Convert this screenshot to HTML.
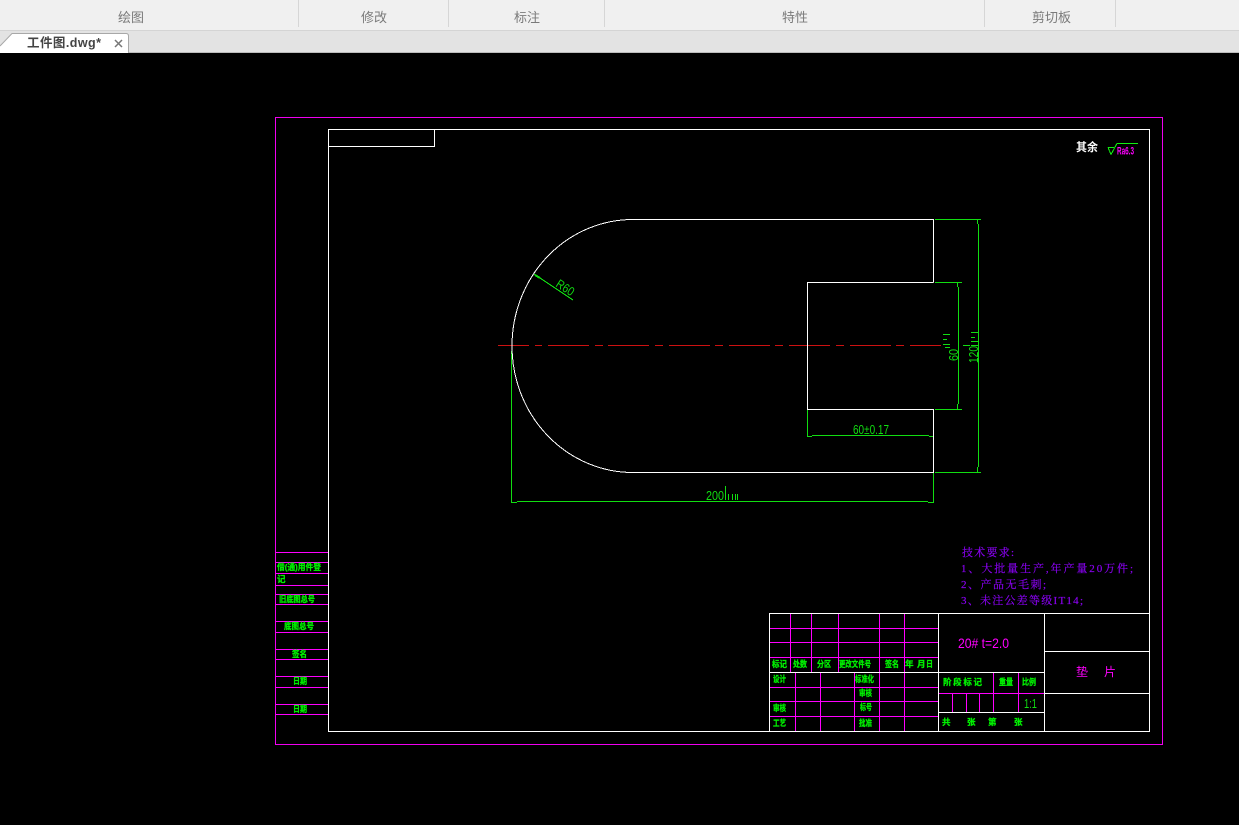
<!DOCTYPE html>
<html lang="zh">
<head>
<meta charset="utf-8">
<title>工件图.dwg</title>
<style>
html,body{margin:0;padding:0;width:1239px;height:825px;overflow:hidden;background:#000}
svg{display:block;position:absolute;left:0;top:0}
.ui{font-family:"Liberation Sans","Noto Sans CJK SC",sans-serif}
.l{font-family:"Liberation Sans","Noto Sans CJK SC",sans-serif;font-size:8.5px;fill:#00f000;stroke:#00f000;stroke-width:.3px;font-weight:700}
.d{font-family:"Liberation Sans",sans-serif;font-size:12.5px;fill:#11dd11}
.t{font-family:"Liberation Serif","Noto Serif CJK SC",serif;font-size:11px;fill:#9000f0;stroke:#8000f0;stroke-width:.2px}
</style>
</head>
<body>
<svg width="1239" height="825" viewBox="0 0 1239 825" xmlns="http://www.w3.org/2000/svg">
<!-- UI chrome -->
<rect x="0" y="0" width="1239" height="30" fill="#f0f0f0"/>
<rect x="0" y="30" width="1239" height="1" fill="#d4d4d4"/>
<rect x="0" y="31" width="1239" height="21" fill="#e3e3e3"/>
<rect x="0" y="52" width="1239" height="1" fill="#bdbdbd"/>
<g fill="#d6d6d6">
<rect x="298" y="0" width="1" height="27"/><rect x="448" y="0" width="1" height="27"/>
<rect x="604" y="0" width="1" height="27"/><rect x="984" y="0" width="1" height="27"/>
<rect x="1115" y="0" width="1" height="27"/>
</g>
<g class="ui" font-size="13" fill="#7a7a7a">
<text x="118" y="22">绘图</text>
<text x="361" y="22">修改</text>
<text x="514" y="22">标注</text>
<text x="782" y="22">特性</text>
<text x="1032" y="22">剪切板</text>
</g>
<path d="M0 53V46L12 33.5H126Q128.500 33.500 128.500 36V53Z" fill="#fff"/>
<path d="M0 46L12 33.500H126Q128.500 33.500 128.500 36V53" fill="none" stroke="#a8a8a8"/>
<text class="ui" x="27" y="47" font-size="12.500" font-weight="700" fill="#444" textLength="74">工件图.dwg*</text>
<path d="M115 40L122 47M122 40L115 47" stroke="#777" stroke-width="1.500" fill="none"/>
<rect x="0" y="53" width="1239" height="772" fill="#000"/>

<!-- frames -->
<g shape-rendering="crispEdges" fill="none">
<rect x="275.500" y="117.500" width="887" height="627" stroke="#f000f0"/>
<rect x="328.500" y="129.500" width="821" height="602" stroke="#fff"/>
<path d="M328 146.500H434.500V130" stroke="#fff"/>

<!-- left stripes -->
<path stroke="#ff00ff" d="M276 552.500H328M276 562.500H328M276 573.500H328M276 585.500H328M276 594.500H328M276 604.500H328M276 621.500H328M276 632.500H328M276 649.500H328M276 659.500H328M276 676.500H328M276 687.500H328M276 704.500H328M276 714.500H328"/>

<!-- title block magenta -->
<path stroke="#ff00ff" d="M770 628.500H938M770 642.500H938M770 657.500H938M790.500 614V672M811.500 614V672M838.500 614V672M879.500 614V672M904.500 614V672M770 687.500H938M770 701.500H938M770 716.500H938M795.500 673V731M820.500 673V731M854.500 673V731M879.500 673V731M904.500 673V731M939 693.500H1044M993.500 673V712M1018.500 673V712M952.500 694V712M966.500 694V712M979.500 694V712"/>
<!-- title block white -->
<path stroke="#fff" d="M769.500 731V613.500H1149M938.500 614V731M1044.500 614V731M1045 651.500H1149M1045 693.500H1149M770 672.500H1044M939 712.500H1044"/>

<!-- centre line -->
<path stroke="#cc1111" d="M498 345.500H529M535 345.500H542M548 345.500H589M595 345.500H603M608 345.500H649M655 345.500H663M669 345.500H710M715 345.500H723M729 345.500H770M775 345.500H783M789 345.500H830M836 345.500H844M850 345.500H891M896 345.500H904M910 345.500H941"/>

<!-- green dimensions -->
<path stroke="#11dd11" d="M935 219.500H981M935 472.500H981M978.500 224V467M977.500 220V224M977.500 467V472M935 282.500H962M935 409.500H962M958.500 287V404M957.500 283V287M957.500 404V409M807.500 410V437M933.500 427V503M812 435.500H929M808 436.500H812M929 436.500H933M511.500 351V503M517 501.500H928M512 502.500H517M928 502.500H933"/>
<path stroke="#11dd11" d="M943 334.500H950M943 339.500H947M943 344.500H950M945 347.500H950M963 345.500H970M971 332.500H978M971 337.500H975M971 341.500H978M971 345.500H978M725.500 486V500M728.500 494V500M732.500 494V500M735.500 494V500M737.500 494V500"/>
<path stroke="#11dd11" d="M534 274L573 300"/>
<path stroke="#11dd11" stroke-width="2" d="M535 275L540 278"/>
<!-- surface symbol -->
<path stroke="#11ee11" d="M1108 147.500H1114M1108 147.500L1111 154.500L1117 143.500H1138"/>
<!-- drawing -->
<path stroke="#fff" d="M933.500 282.500V219.500H633A121 126.500 0 0 0 633 472.500H933.500V409.500H807.500V282.500H933.500"/>
</g>

<!-- dimension text -->
<text class="d" x="706" y="500" textLength="18" lengthAdjust="spacingAndGlyphs">200</text>
<text class="d" x="853" y="434" textLength="36" lengthAdjust="spacingAndGlyphs">60±0.17</text>
<text class="d" transform="translate(958,361) rotate(-90)" textLength="12" lengthAdjust="spacingAndGlyphs">60</text>
<text class="d" transform="translate(978,363) rotate(-90)" textLength="17" lengthAdjust="spacingAndGlyphs">120</text>
<text class="d" transform="translate(555,286) rotate(33)" textLength="19" lengthAdjust="spacingAndGlyphs">R60</text>

<!-- surface finish -->
<text x="1076" y="151" font-family="'Liberation Sans','Noto Sans CJK SC',sans-serif" font-size="11.500" font-weight="700" fill="#fff" textLength="22" lengthAdjust="spacingAndGlyphs">其余</text>
<text x="1117" y="154.500" font-family="'Liberation Sans',sans-serif" font-size="11" font-weight="700" fill="#ff00ff" textLength="17" lengthAdjust="spacingAndGlyphs">Ra6.3</text>

<!-- tech requirements -->
<text class="t" x="962" y="556" textLength="52">技术要求:</text>
<text class="t" x="961" y="572" textLength="172">1、大批量生产,年产量20万件;</text>
<text class="t" x="961" y="588" textLength="85">2、产品无毛刺;</text>
<text class="t" x="961" y="604" textLength="122">3、未注公差等级IT14;</text>

<!-- title block large text -->
<text x="958" y="648" font-family="'Liberation Sans',sans-serif" font-size="14" fill="#ff00ff" textLength="51" lengthAdjust="spacingAndGlyphs">20# t=2.0</text>
<text x="1076" y="676" font-family="'Liberation Sans','Noto Sans CJK SC',sans-serif" font-size="12" fill="#ff00ff">垫</text>
<text x="1104" y="676" font-family="'Liberation Sans','Noto Sans CJK SC',sans-serif" font-size="12" fill="#ff00ff">片</text>
<text x="1024" y="708" font-family="'Liberation Sans',sans-serif" font-size="12.500" fill="#11dd11" textLength="13" lengthAdjust="spacingAndGlyphs">1:1</text>

<!-- title block labels -->
<text class="l" x="772" y="667" textLength="15" lengthAdjust="spacingAndGlyphs">标记</text>
<text class="l" x="793" y="667" textLength="14" lengthAdjust="spacingAndGlyphs">处数</text>
<text class="l" x="817" y="667" textLength="14" lengthAdjust="spacingAndGlyphs">分区</text>
<text class="l" x="839" y="667" textLength="32" lengthAdjust="spacingAndGlyphs">更改文件号</text>
<text class="l" x="885" y="667" textLength="14" lengthAdjust="spacingAndGlyphs">签名</text>
<text class="l" x="905" y="667">年</text>
<text class="l" x="917" y="667">月</text>
<text class="l" x="926" y="667" textLength="7" lengthAdjust="spacingAndGlyphs">日</text>
<text class="l" x="773" y="682" textLength="13" lengthAdjust="spacingAndGlyphs">设计</text>
<text class="l" x="855" y="682" textLength="19" lengthAdjust="spacingAndGlyphs">标准化</text>
<text class="l" x="859" y="696" textLength="13" lengthAdjust="spacingAndGlyphs">审核</text>
<text class="l" x="773" y="711" textLength="13" lengthAdjust="spacingAndGlyphs">审核</text>
<text class="l" x="860" y="710" textLength="12" lengthAdjust="spacingAndGlyphs">标号</text>
<text class="l" x="773" y="726" textLength="13" lengthAdjust="spacingAndGlyphs">工艺</text>
<text class="l" x="859" y="726" textLength="13" lengthAdjust="spacingAndGlyphs">批准</text>
<text class="l" x="943" y="685" textLength="39">阶段标记</text>
<text class="l" x="999" y="685" textLength="14" lengthAdjust="spacingAndGlyphs">重量</text>
<text class="l" x="1022" y="685" textLength="14" lengthAdjust="spacingAndGlyphs">比例</text>
<text class="l" x="942" y="725">共</text>
<text class="l" x="967" y="725">张</text>
<text class="l" x="988" y="725">第</text>
<text class="l" x="1014" y="725">张</text>

<!-- left stripe labels -->
<text class="l" x="277" y="570" textLength="44" lengthAdjust="spacingAndGlyphs">借(通)用件登</text>
<text class="l" x="277" y="582">记</text>
<text class="l" x="279" y="602" textLength="36" lengthAdjust="spacingAndGlyphs">旧底图总号</text>
<text class="l" x="284" y="629" textLength="30" lengthAdjust="spacingAndGlyphs">底图总号</text>
<text class="l" x="292" y="657" textLength="15" lengthAdjust="spacingAndGlyphs">签名</text>
<text class="l" x="293" y="684" textLength="14" lengthAdjust="spacingAndGlyphs">日期</text>
<text class="l" x="293" y="712" textLength="14" lengthAdjust="spacingAndGlyphs">日期</text>
</svg>
</body>
</html>
